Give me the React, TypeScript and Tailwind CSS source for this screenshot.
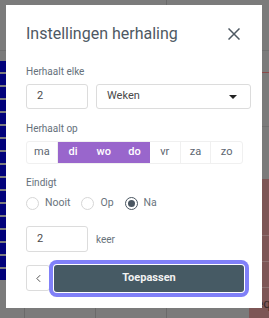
import { useState } from 'react'

const days = [
  { key: 'ma', on: false },
  { key: 'di', on: true },
  { key: 'wo', on: true },
  { key: 'do', on: true },
  { key: 'vr', on: false },
  { key: 'za', on: false },
  { key: 'zo', on: false },
]

const endOptions = ['Nooit', 'Op', 'Na']

function Radio({ label, checked, onClick }: { label: string; checked: boolean; onClick: () => void }) {
  return (
    <button type="button" onClick={onClick} className="flex items-center gap-[6px]">
      <span
        className={`flex h-[13px] w-[13px] items-center justify-center rounded-full border ${
          checked ? 'border-[#4a5661]' : 'border-[#d6d6d6]'
        }`}
      >
        {checked && <span className="h-[7px] w-[7px] rounded-full bg-[#4a5661]" />}
      </span>
      <span className="text-[10.5px] leading-4 text-[#69737c]">{label}</span>
    </button>
  )
}

export default function App() {
  const [ends, setEnds] = useState('Na')

  return (
    <div className="relative h-[318px] w-[269px] overflow-hidden bg-[#7b7b7b] font-['Roboto',sans-serif]">
      {/* backdrop: the calendar behind the dimmed overlay */}
      <div className="flex h-full flex-col">
        <div className="flex h-[51px] border-b border-[#707070]">
          <div className="w-[167px] border-r border-[#6a6a6a]" />
        </div>
        <div className="flex flex-1">
          <div className="flex w-[6px] flex-col gap-[2px] pt-[10px]">
            {Array.from({ length: 17 }).map((_, i) => (
              <div key={i} className="h-[11px] bg-[#01017a]" />
            ))}
          </div>
          <div className="flex flex-1 flex-col">
            <div className="flex-1" />
            <div className="flex h-[12px]">
              <div className="w-[19px] border-r border-[#6a6a6a]" />
              <div className="w-[71px] border-r border-[#6a6a6a]" />
              <div className="w-[71px] border-r border-[#6a6a6a]" />
            </div>
          </div>
          <div className="flex w-[20px] flex-col">
            <div className="h-[22px] border-b border-[#8c4a4a] pl-[2px] text-[13px] text-[#333]">J</div>
            <div className="h-[54px] border-b border-[#707070]" />
            <div className="h-[52px]" />
            <div className="flex-1 overflow-hidden bg-[#7d5656]">
              <div className="h-[57px] border-b border-[#8d7070]" />
              <div className="h-[26px] border-b border-[#8d7070]" />
              <div className="h-[26px] border-b border-[#8d7070]" />
              <div className="pt-[8px] text-[13px] leading-4 text-[#3a2a2a]">deque</div>
            </div>
          </div>
        </div>
      </div>

      {/* modal */}
      <div className="absolute left-[6px] top-[5px] flex h-[303px] w-[256px] flex-col bg-white pl-[20px] pt-[17px]">
        <div className="flex h-[24px] items-center">
          <h2 className="flex-1 text-[16px] leading-6 text-[#4e5963]">Instellingen herhaling</h2>
          <svg viewBox="0 0 12 12" className="mr-[22px] h-[12px] w-[12px]" fill="none" stroke="#4e5963" strokeWidth="1.5">
            <path d="M0.5 0.5 L11.5 11.5 M11.5 0.5 L0.5 11.5" />
          </svg>
        </div>

        <div className="mt-[18px] text-[10px] leading-4 text-[#66717b]">Herhaalt elke</div>
        <div className="mt-[4px] flex gap-[8px]">
          <div className="flex h-[25px] w-[62px] items-center rounded-[3px] border border-[#dcdcdc] pl-[10px] text-[11px] text-[#4a4a4a]">
            2
          </div>
          <div className="flex h-[25px] w-[155px] items-center justify-between rounded-[3px] border border-[#dcdcdc] pl-[10px] pr-[13px] text-[11px] text-[#4a4a4a]">
            <span>Weken</span>
            <span className="h-0 w-0 border-x-[4px] border-t-[4px] border-x-transparent border-t-[#222]" />
          </div>
        </div>

        <div className="mt-[12px] text-[10px] leading-4 text-[#66717b]">Herhaalt op</div>
        <div className="mt-[4px] flex h-[23px] w-[217px] rounded-[3px] border border-[#f0f0f0]">
          {days.map((d) => (
            <div
              key={d.key}
              className={`flex w-[31px] items-center justify-center text-[11px] ${
                d.on ? 'bg-[#9966cc] font-medium text-white' : 'border-r border-[#f0f0f0] text-[#5c6670] last:border-r-0'
              }`}
            >
              {d.key}
            </div>
          ))}
        </div>

        <div className="mt-[11px] text-[10px] leading-4 text-[#66717b]">Eindigt</div>
        <div className="mt-[4px] flex h-[16px] items-center gap-[11px]">
          {endOptions.map((o) => (
            <Radio key={o} label={o} checked={ends === o} onClick={() => setEnds(o)} />
          ))}
        </div>

        <div className="mt-[15px] flex items-center gap-[8px]">
          <div className="flex h-[26px] w-[62px] items-center rounded-[3px] border border-[#dcdcdc] pl-[10px] text-[11px] text-[#4a4a4a]">
            2
          </div>
          <span className="text-[10px] text-[#69737c]">keer</span>
        </div>

        <div className="mt-[13px] flex h-[26px] items-center gap-[4px]">
          <button
            type="button"
            className="flex h-[26px] w-[24px] items-center justify-center rounded-[3px] border border-[#dcdcdc]"
          >
            <svg viewBox="0 0 6 10" className="h-[9px] w-[5px]" fill="none" stroke="#555" strokeWidth="1.2">
              <path d="M5 1 L1 5 L5 9" />
            </svg>
          </button>
          <button
            type="button"
            className="h-[27px] w-[190px] rounded-[3px] bg-[#465a64] text-[11px] font-bold text-[#f2f2f2] ring-4 ring-[#8080f8] ring-offset-1 ring-offset-white"
          >
            Toepassen
          </button>
        </div>
      </div>
    </div>
  )
}
